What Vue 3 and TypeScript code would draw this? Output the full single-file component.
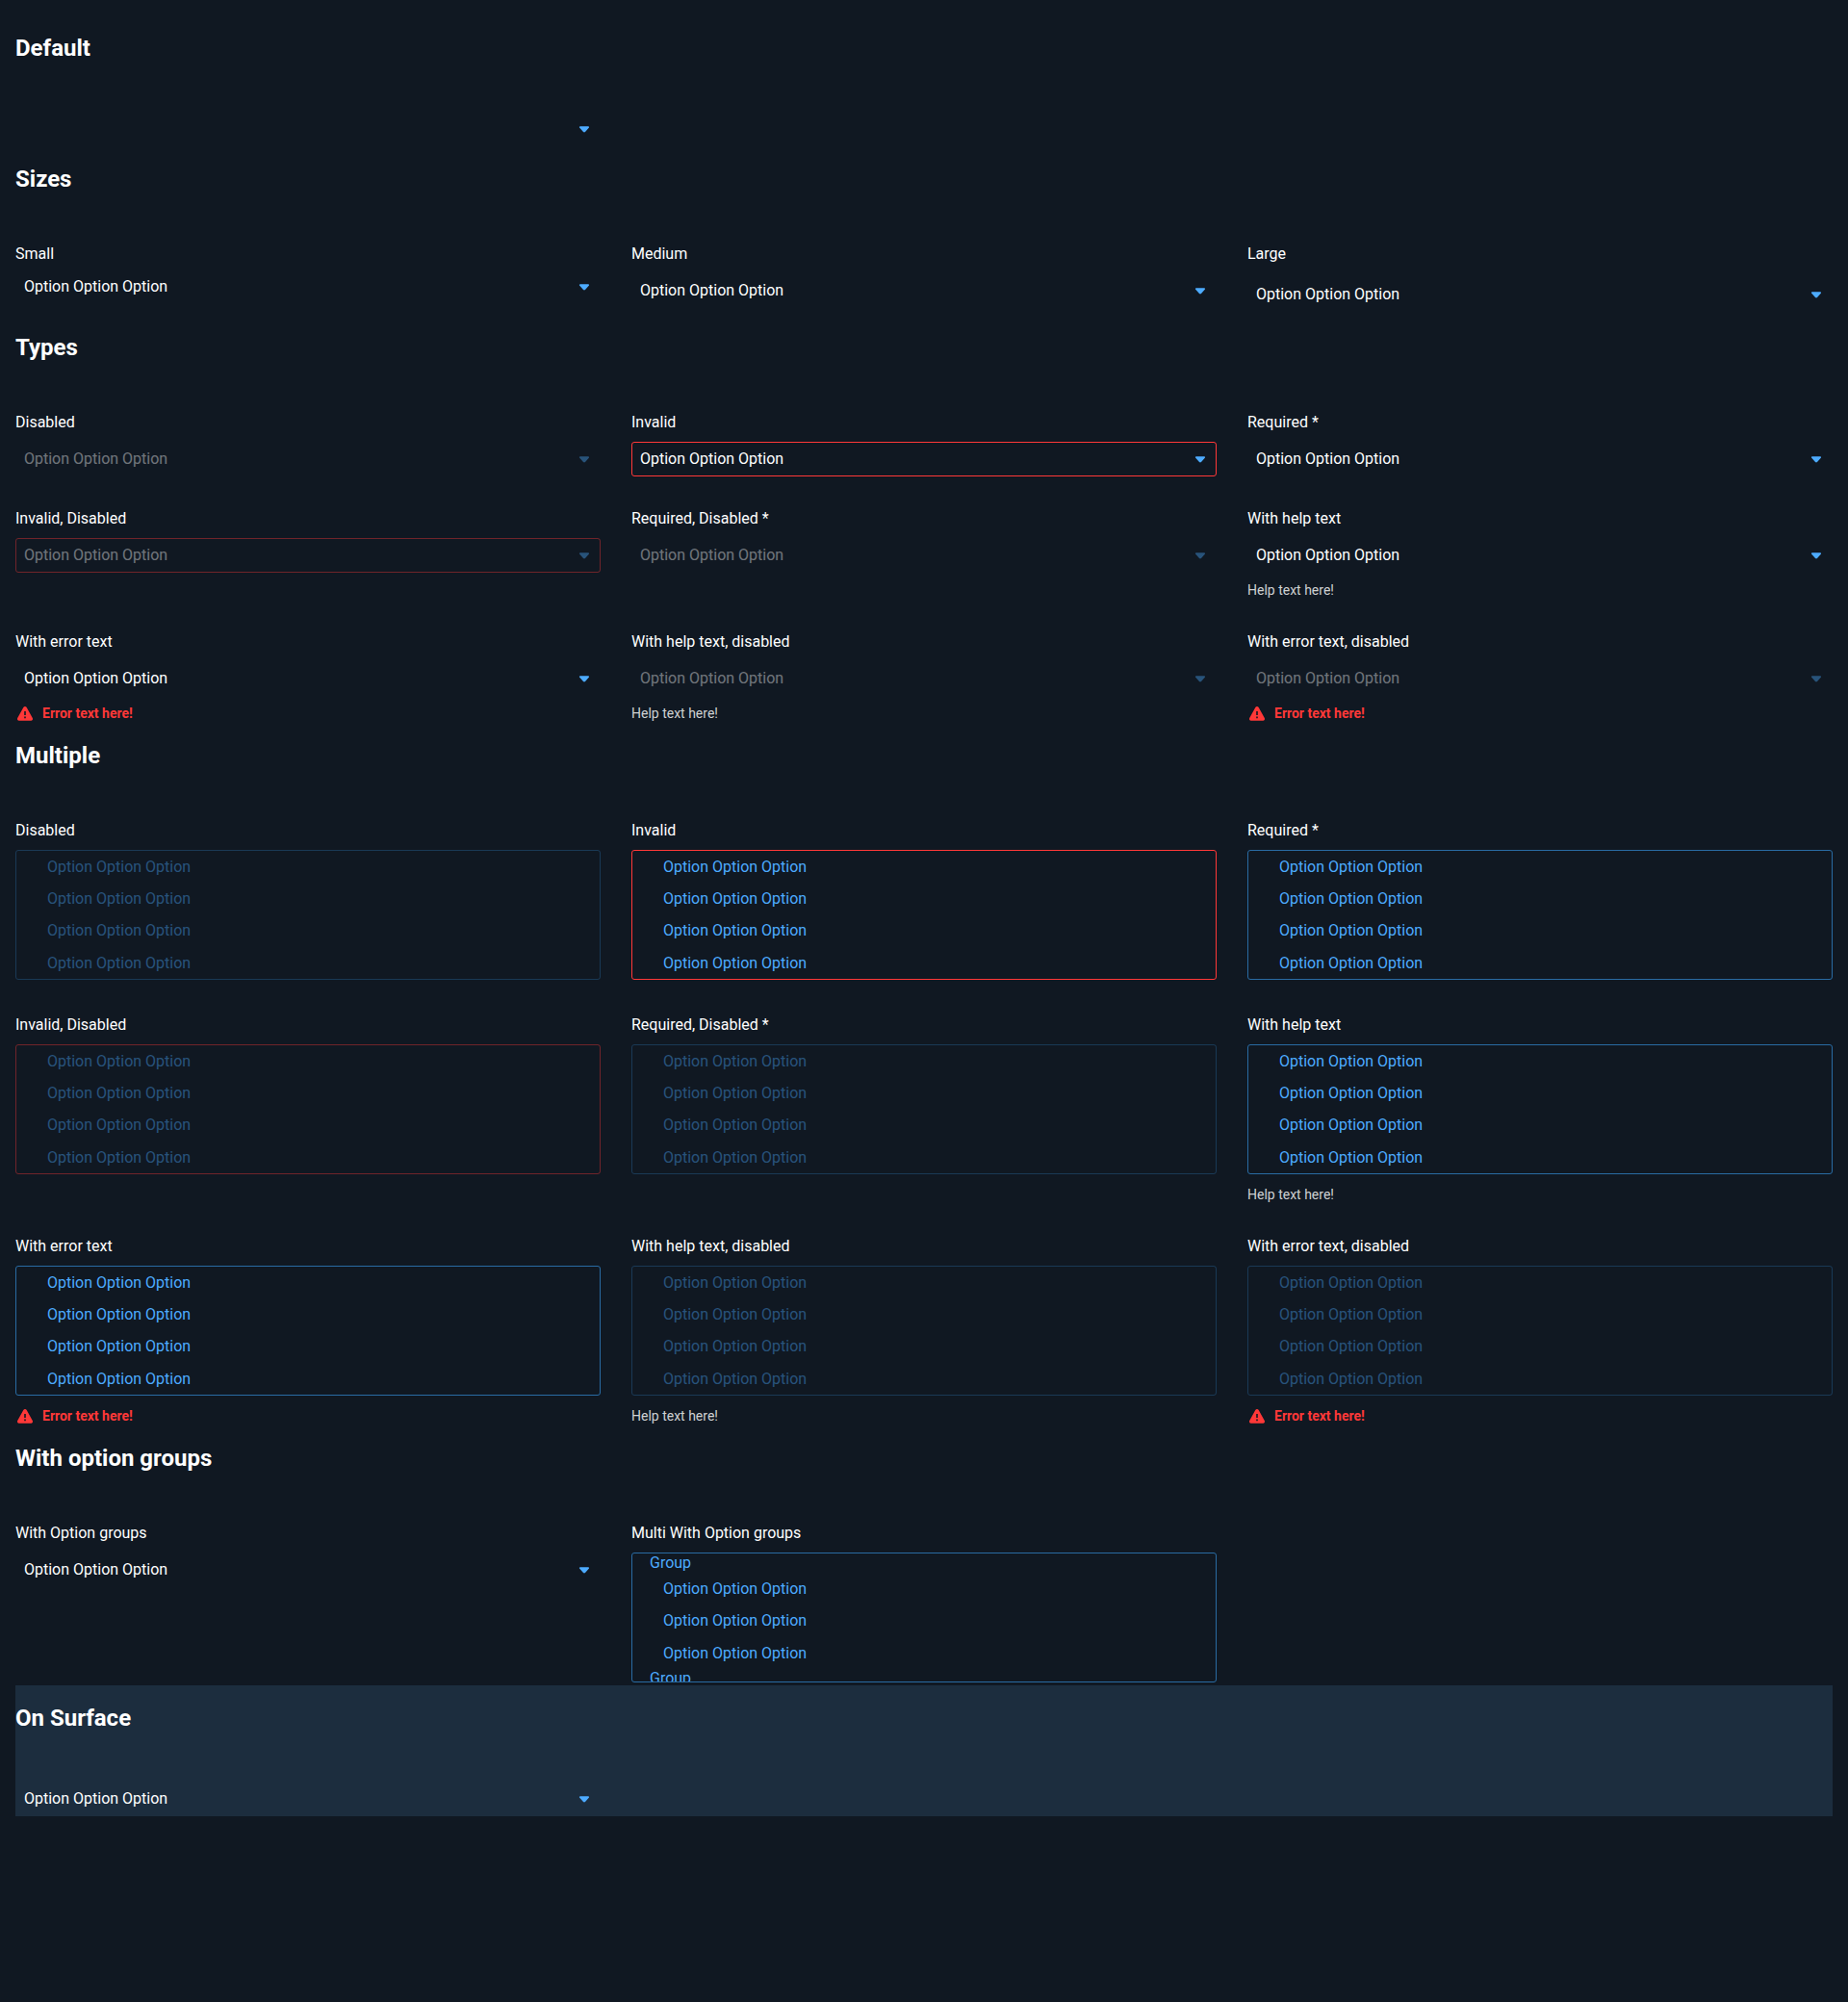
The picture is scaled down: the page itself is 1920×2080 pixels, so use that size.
<script setup lang="ts">
interface Field {
  id: string
  label?: string
  size?: 'small' | 'medium' | 'large'
  multiple?: boolean
  grouped?: boolean
  empty?: boolean
  disabled?: boolean
  invalid?: boolean
  required?: boolean
  help?: string
  error?: string
}

interface Section {
  title: string
  surface?: boolean
  fields: Field[]
}

const optionText = 'Option Option Option'
const helpText = 'Help text here!'
const errorText = 'Error text here!'

function stateFields(prefix: string, multiple: boolean): Field[] {
  const states: Omit<Field, 'id'>[] = [
    { label: 'Disabled', disabled: true },
    { label: 'Invalid', invalid: true },
    { label: 'Required', required: true },
    { label: 'Invalid, Disabled', invalid: true, disabled: true },
    { label: 'Required, Disabled', required: true, disabled: true },
    { label: 'With help text', help: helpText },
    { label: 'With error text', error: errorText },
    { label: 'With help text, disabled', help: helpText, disabled: true },
    { label: 'With error text, disabled', error: errorText, disabled: true },
  ]
  return states.map((state, index) => ({ ...state, id: `${prefix}-${index}`, multiple }))
}

const sections: Section[] = [
  { title: 'Default', fields: [{ id: 'default', empty: true }] },
  {
    title: 'Sizes',
    fields: [
      { id: 'size-small', label: 'Small', size: 'small' },
      { id: 'size-medium', label: 'Medium', size: 'medium' },
      { id: 'size-large', label: 'Large', size: 'large' },
    ],
  },
  { title: 'Types', fields: stateFields('type', false) },
  { title: 'Multiple', fields: stateFields('multiple', true) },
  {
    title: 'With option groups',
    fields: [
      { id: 'groups', label: 'With Option groups', grouped: true },
      { id: 'groups-multiple', label: 'Multi With Option groups', grouped: true, multiple: true },
    ],
  },
  { title: 'On Surface', surface: true, fields: [{ id: 'surface' }] },
]
</script>

<template>
  <main class="page">
    <section
      v-for="section in sections"
      :key="section.title"
      class="section"
      :class="{ surface: section.surface }"
    >
      <h2 class="title">{{ section.title }}</h2>
      <div class="grid">
        <div v-for="field in section.fields" :key="field.id" class="field">
          <label v-if="field.label" class="label" :for="field.id">
            {{ field.label }}<template v-if="field.required"> *</template>
          </label>
          <div class="control" :class="{ list: field.multiple }">
            <select
              :id="field.id"
              class="select"
              :class="[field.size ?? 'medium', { invalid: field.invalid }]"
              :multiple="field.multiple"
              :size="field.multiple ? 4 : undefined"
              :disabled="field.disabled"
              :required="field.required"
              :aria-label="field.label ? undefined : section.title"
              :aria-invalid="field.invalid"
              :aria-describedby="field.help || field.error ? `${field.id}-note` : undefined"
            >
              <option v-if="field.empty"></option>
              <template v-if="field.grouped">
                <optgroup v-for="group in 2" :key="group" label="Group">
                  <option v-for="n in 3" :key="n">{{ optionText }}</option>
                </optgroup>
              </template>
              <template v-else>
                <option v-for="n in 4" :key="n">{{ optionText }}</option>
              </template>
            </select>
            <svg v-if="!field.multiple" class="caret" viewBox="0 0 16 16" aria-hidden="true">
              <path d="M3.900 5.200h8.200c1 0 1.300 1 .7 1.600l-3.800 4.200c-.6.600-1.400.600-2 0L3.200 6.800c-.6-.6-.3-1.600.7-1.600z" />
            </svg>
          </div>
          <p v-if="field.help" :id="`${field.id}-note`" class="note">{{ field.help }}</p>
          <p v-if="field.error" :id="`${field.id}-note`" class="note error">
            <svg class="warning" viewBox="0 0 20 20" aria-hidden="true">
              <path
                fill-rule="evenodd"
                d="M8.300 3.900c.8-1.300 2.600-1.300 3.400 0l6.100 11.200c.7 1.300-.1 2.700-1.500 2.700H3.700c-1.400 0-2.200-1.400-1.500-2.700zM9.200 8v4h1.600V8zM9.200 13.500v1.700h1.600v-1.700z"
              />
            </svg>
            {{ field.error }}
          </p>
        </div>
      </div>
    </section>
  </main>
</template>

<style>
body {
  margin: 0;
  background: #101822;
}
</style>

<style scoped>
.page {
  padding: 16px;
  color: #fff;
  font: 400 16px/24px Roboto, sans-serif;
}

.surface {
  background: #1c2d3e;
}

.title {
  margin: 0;
  padding: 16px 0 48px;
  font-size: 24px;
  line-height: 36px;
  font-weight: 700;
}

.grid {
  display: grid;
  grid-template-columns: repeat(3, minmax(0, 1fr));
  gap: 32px;
}

.label {
  display: block;
  margin-bottom: 8px;
}

.control {
  display: grid;
}

.control.list {
  padding-bottom: 3px;
}

.select {
  grid-area: 1 / 1;
  box-sizing: border-box;
  width: 100%;
  margin: 0;
  padding: 0 32px 0 8px;
  border: 1px solid transparent;
  border-radius: 3px;
  outline: 0;
  appearance: none;
  background: transparent;
  color: #fff;
  font: inherit;
}

.small {
  height: 28px;
}

.medium {
  height: 36px;
}

.large {
  height: 43px;
}

.list .select {
  height: 135px;
  padding: 0;
  overflow: hidden;
  border-color: #296ba3;
  color: #4dabff;
  line-height: 19px;
}

.list option {
  padding: 7px 32px;
  color: inherit;
}

.list optgroup {
  padding: 0 16px;
  font-weight: 400;
}

.list optgroup option {
  padding: 7px 16px;
}

.list optgroup option::before {
  content: none;
}

.list .select.invalid,
.select.invalid {
  border-color: #ff3838;
}

.select:disabled,
.select:disabled + .caret {
  opacity: 0.4;
}

.caret {
  grid-area: 1 / 1;
  align-self: center;
  justify-self: end;
  width: 16px;
  height: 16px;
  margin-right: 9px;
  fill: #4dabff;
  pointer-events: none;
}

.note {
  display: flex;
  align-items: center;
  gap: 8px;
  margin: 8px 0 0;
  color: #cfd1d3;
  font-size: 14px;
  line-height: 20px;
}

.error {
  color: #ff3838;
  font-weight: 700;
}

.warning {
  width: 20px;
  height: 20px;
  fill: currentColor;
}
</style>
